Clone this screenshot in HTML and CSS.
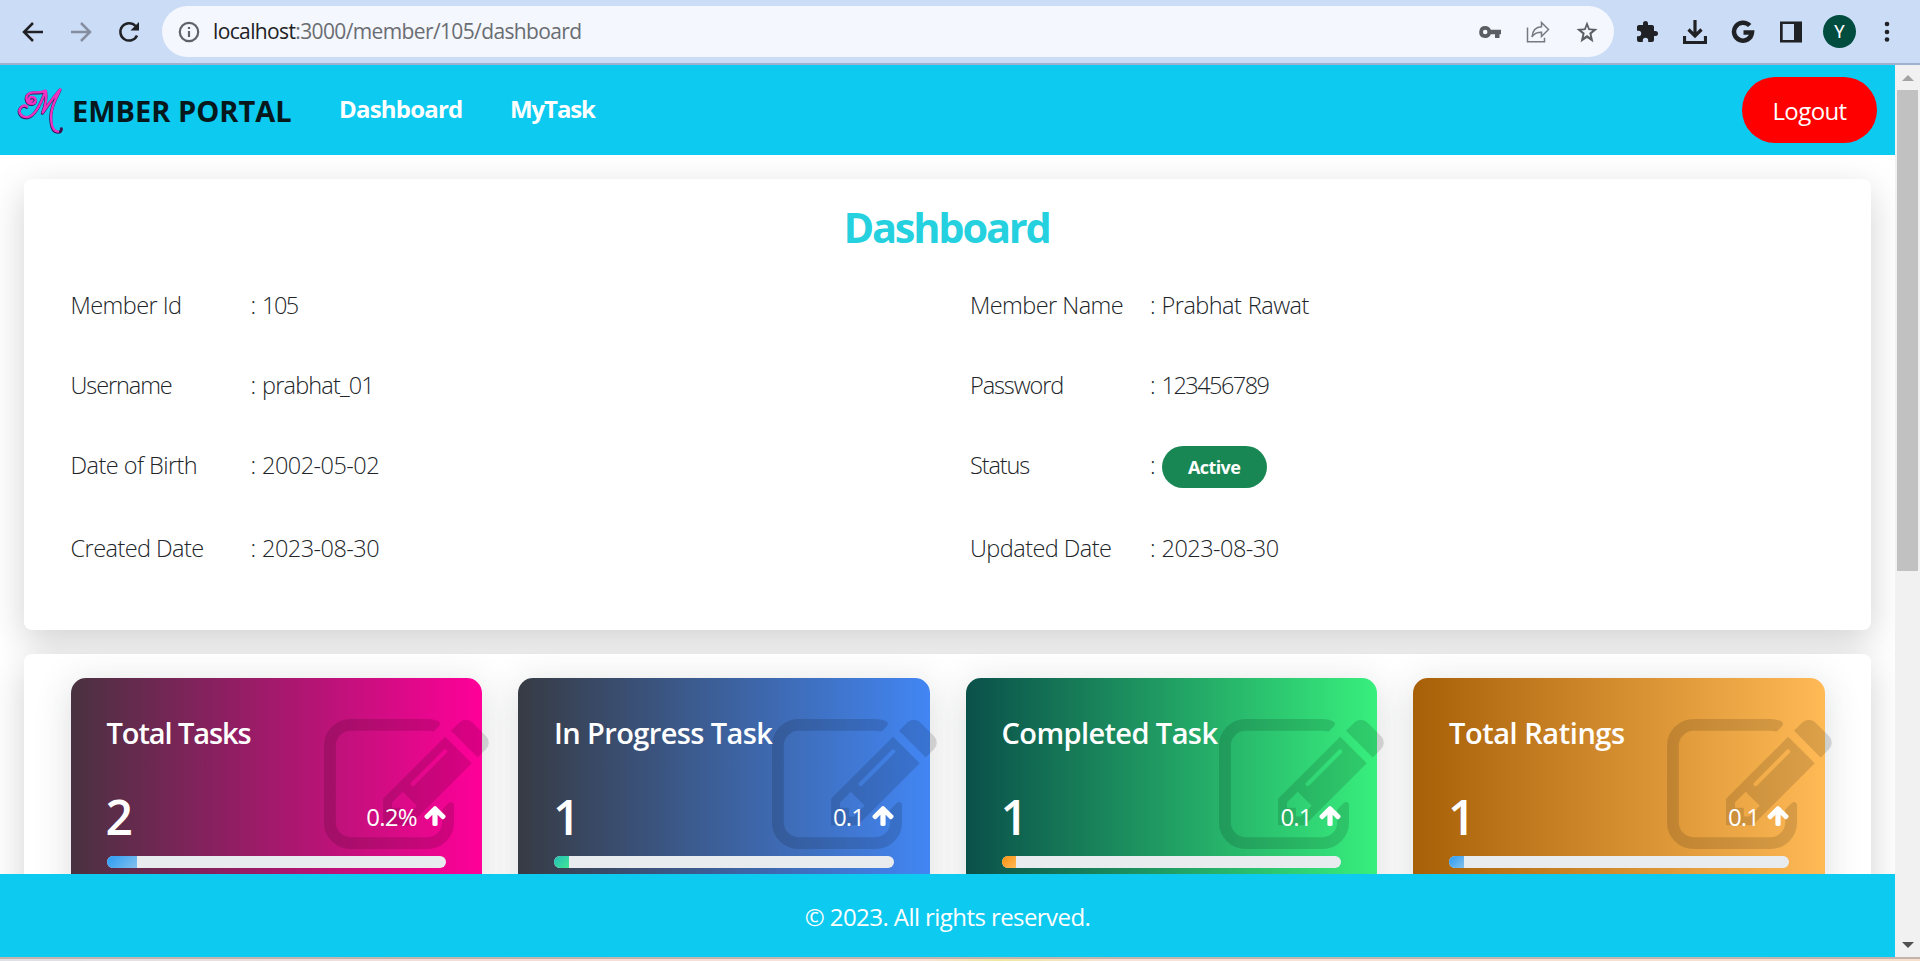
FILE: index.html
```html
<!DOCTYPE html>
<html lang="en">
<head>
<meta charset="utf-8">
<title>Member Portal</title>
<link rel="stylesheet" href="styles.css">
</head>
<body>
<svg class="defs" aria-hidden="true">
  <symbol id="edit" viewBox="0 128 1792 1408"><path d="M888 1184l116-116-152-152-116 116v56h96v96h56zM1328 464q-16-16-33 1l-350 350q-17 17-1 33t33-1l350-350q17-17 1-33zM1408 1058v190q0 119-84.500 203.500t-203.500 84.500h-832q-119 0-203.500-84.500t-84.500-203.500v-832q0-119 84.500-203.500t203.500-84.500h832q63 0 117 25 15 7 18 23 3 17-9 29l-49 49q-14 14-32 8-23-6-45-6h-832q-66 0-113 47t-47 113v832q0 66 47 113t113 47h832q66 0 113-47t47-113v-126q0-13 9-22l64-64q15-15 35-7t20 29zM1312 320l288 288-672 672h-288v-288zM1756 452l-92 92-288-288 92-92q28-28 68-28t68 28l152 152q28 28 28 68t-28 68z"/></symbol>
  <symbol id="up" viewBox="117 192 1558 1472"><path d="M1675 971q0 51-37 90l-75 75q-38 38-91 38-54 0-90-38l-294-293v704q0 52-37.500 84.500t-90.500 32.500h-128q-53 0-90.500-32.500t-37.500-84.500v-704l-294 293q-36 38-90 38t-90-38l-75-75q-38-38-38-90 0-53 38-91l651-651q35-37 90-37 54 0 91 37l651 651q37 39 37 91z"/></symbol>
</svg>
<div class="window">
  <div class="toolbar">
    <div class="nav-buttons">
      <svg width="24" height="24" viewBox="0 0 24 24" class="line"><path d="M22 12H3M12 3 3 12l9 9"/></svg>
      <svg width="24" height="24" viewBox="0 0 24 24" class="line faded"><path d="M2 12h19M12 3l9 9-9 9"/></svg>
      <svg width="24" height="24" viewBox="0 0 24 24" class="line"><path d="M20 15.500A8.700 8.700 0 1 1 18.500 6"/><path class="solid" d="M22 2v8.500h-8.500z"/></svg>
    </div>
    <div class="omnibox">
      <svg width="22" height="22" viewBox="0 0 22 22" class="info"><circle cx="11" cy="11" r="9.200"/><path d="M11 10v6M11 6v2"/></svg>
      <span class="url"><b>localhost</b>:3000/member/105/dashboard</span>
      <div class="box-icons">
        <svg width="22" height="14" viewBox="0 0 22 14"><path fill="#5b5e63" fill-rule="evenodd" d="M6.200 1a6 6 0 0 1 5.600 3.700H22v4.600h-1.500V13H16V9.300h-4.200A6 6 0 1 1 6.200 1zm0 3.700a2.300 2.300 0 1 0 0 4.600 2.300 2.300 0 0 0 0-4.600z"/></svg>
        <svg width="24" height="24" viewBox="0 0 24 24" class="share"><path d="M1.500 7.500v14.200h17v-4"/><path d="M6 17c.6-7 4-10 9.500-10.200V2.500l7 7-7 7v-4.200C11 12.300 8 13.500 6 17z"/></svg>
        <svg width="24" height="24" viewBox="0 0 24 24"><path fill="#5b5e63" fill-rule="evenodd" d="M12 1.500l2.700 6.900 7.800.6-6 5 1.900 8.200-6.400-4.200-6.400 4.200 1.900-8.200-6-5 7.800-.6zM12 6.300l-1.400 3.800-4.100.3 3.200 2.600-1 4.200 3.300-2.200 3.300 2.200-1-4.200 3.200-2.600-4.100-.3z"/></svg>
      </div>
    </div>
    <div class="actions">
      <svg width="24" height="24" viewBox="0 0 24 24"><path fill="#202124" d="M20.500 11H19V7c0-1.100-.9-2-2-2h-4V3.500a2.500 2.500 0 0 0-5 0V5H4c-1.100 0-2 .9-2 2v3.800h1.500a2.700 2.700 0 0 1 0 5.400H2V20c0 1.100.9 2 2 2h3.800v-1.500a2.700 2.700 0 0 1 5.400 0V22H17c1.100 0 2-.9 2-2v-4h1.500a2.500 2.500 0 0 0 0-5z"/></svg>
      <svg width="24" height="24" viewBox="0 0 24 24" class="download"><path d="M12 0v16M5.500 9.500 12 16l6.500-6.500M1.500 16v6.500h21V16"/></svg>
      <svg width="24" height="24" viewBox="0 0 24 24" class="google"><path d="M18.700 5.600A9 9 0 1 0 21 12.500H12.500"/></svg>
      <svg width="24" height="24" viewBox="0 0 24 24"><path fill="#202124" fill-rule="evenodd" d="M1 1.500h22v21H1zM3.700 4v16H15V4z"/></svg>
      <span class="avatar">Y</span>
      <svg width="6" height="22" viewBox="0 0 6 22" fill="#202124"><circle cx="3" cy="3" r="2.300"/><circle cx="3" cy="11" r="2.300"/><circle cx="3" cy="18.500" r="2.300"/></svg>
    </div>
  </div>
  <div class="viewport">
    <div class="page">
      <header class="navbar">
        <svg class="logo" width="47" height="47" viewBox="51 51 141 141">
          <g class="shade"><path d="M97 91c-3 7-13 3-10-5 4-9 21-5 20 6-1 13-24 13-27-3-3-14 7-22 21-22 15 1 26 0 36-5-10 28-28 75-53 79-23 3-32-18-20-30 5-5 12-5 17-1"/><path d="M138 64c3 23-2 44-10 64 18-26 34-49 53-70-15 31-32 61-27 97 2 20 8 29 20 30 8 0 13-5 11-11"/></g>
          <g class="ink"><path d="M97 91c-3 7-13 3-10-5 4-9 21-5 20 6-1 13-24 13-27-3-3-14 7-22 21-22 15 1 26 0 36-5-10 28-28 75-53 79-23 3-32-18-20-30 5-5 12-5 17-1"/><path d="M138 64c3 23-2 44-10 64 18-26 34-49 53-70-15 31-32 61-27 97 2 20 8 29 20 30"/></g>
        </svg>
        <span class="brand">EMBER PORTAL</span>
        <a class="link dash">Dashboard</a>
        <a class="link task">MyTask</a>
        <a class="logout">Logout</a>
      </header>
      <main class="content">
        <section class="panel profile">
          <h1>Dashboard</h1>
          <dl class="fields">
            <div><dt>Member Id</dt><dd>: <span class="digits">105</span></dd></div>
            <div><dt>Member Name</dt><dd>: Prabhat Rawat</dd></div>
            <div><dt class="tight">Username</dt><dd>: <span class="user">prabhat_01</span></dd></div>
            <div><dt class="tight">Password</dt><dd>: <span class="digits">123456789</span></dd></div>
            <div><dt>Date of Birth</dt><dd>: 2002-05-02</dd></div>
            <div><dt class="tight">Status</dt><dd>: <span class="badge">Active</span></dd></div>
            <div><dt>Created Date</dt><dd>: 2023-08-30</dd></div>
            <div><dt>Updated Date</dt><dd>: 2023-08-30</dd></div>
          </dl>
        </section>
        <section class="panel stats">
          <article class="card pink"><svg class="mark"><use href="#edit"/></svg><h2 class="tight">Total Tasks</h2><div class="row"><strong>2</strong><span class="rate">0.2% <svg><use href="#up"/></svg></span></div><div class="track"><i class="blue" style="width:8.900%"></i></div></article>
          <article class="card navy"><svg class="mark"><use href="#edit"/></svg><h2>In Progress Task</h2><div class="row"><strong>1</strong><span class="rate short">0.1 <svg><use href="#up"/></svg></span></div><div class="track"><i class="green" style="width:4.400%"></i></div></article>
          <article class="card leaf"><svg class="mark"><use href="#edit"/></svg><h2>Completed Task</h2><div class="row"><strong>1</strong><span class="rate short">0.1 <svg><use href="#up"/></svg></span></div><div class="track"><i class="orange" style="width:4.400%"></i></div></article>
          <article class="card amber"><svg class="mark"><use href="#edit"/></svg><h2 class="loose">Total Ratings</h2><div class="row"><strong>1</strong><span class="rate short">0.1 <svg><use href="#up"/></svg></span></div><div class="track"><i class="blue" style="width:4.400%"></i></div></article>
        </section>
      </main>
      <footer class="footer"><span>© 2023. All rights reserved.</span></footer>
    </div>
    <div class="scrollbar"><i class="arrow-up"></i><i class="thumb"></i><i class="arrow-down"></i></div>
  </div>
  <div class="edge"></div>
</div>
</body>
</html>
```
FILE: styles.css
```css
* { box-sizing: border-box; }
body { margin: 0; font-family: "Open Sans", "Noto Sans", sans-serif; font-size: 24px; color: #212529; background: #fff; overflow: hidden; }
h1, h2, dl, dd { margin: 0; }
svg { display: block; flex: none; }
.defs { display: none; }
.window { display: flex; flex-direction: column; height: 961px; }

.toolbar { display: flex; align-items: center; height: 65px; flex: none; background: #cbdcf7; border-bottom: 2px solid #a0b0d0; }
.nav-buttons { display: flex; gap: 24px; width: 162px; padding-left: 21px; }
.line { fill: none; stroke: #202124; stroke-width: 2.500; }
.line .solid { fill: #202124; stroke: none; }
.faded { stroke: #858d9f; }
.omnibox { display: flex; align-items: center; width: 1452px; height: 51px; padding: 0 15px 0 16px; border-radius: 26px; background: #f4f7fd; }
.info { fill: none; stroke: #5f6368; stroke-width: 2.200; }
.url { margin-left: 13px; font-size: 21px; letter-spacing: -.63px; line-height: 30px; padding-bottom: 1px; color: #6a6d72; white-space: nowrap; }
.url b { font-weight: 400; color: #202124; }
.box-icons { display: flex; align-items: center; gap: 25px; margin-left: auto; }
.share { fill: none; stroke: #777a7f; stroke-width: 1.500; }
.actions { display: flex; align-items: center; margin-left: 21px; gap: 24px; }
.download { fill: none; stroke: #202124; stroke-width: 3.200; }
.google { fill: none; stroke: #202124; stroke-width: 4.500; }
.avatar { width: 33px; height: 33px; margin-left: -4px; margin-right: 4px; border-radius: 50%; background: #004d40; color: #fff; font: 18px/33px Roboto, sans-serif; text-align: center; }

.viewport { display: flex; flex: none; height: 892px; }
.page { display: flex; flex-direction: column; width: 1895px; }
.navbar { display: flex; align-items: center; height: 90px; flex: none; padding: 0 18px 0 17px; background: #0dcaf0; position: relative; z-index: 1; }
.logo { fill: none; stroke-linecap: round; stroke-linejoin: round; }
.shade { stroke: #3a1450; stroke-width: 9; transform: translate(-1px, 2px); }
.ink { stroke: #f032c2; stroke-width: 7; }
.brand { width: 267px; margin-left: 8px; font-size: 29px; font-weight: 700; color: #06181c; white-space: nowrap; }
.link { font-weight: 700; font-size: 24px; letter-spacing: -.8px; color: #fff; padding-bottom: 4px; }
.dash { width: 171px; }
.task { letter-spacing: -1.100px; }
.logout { margin-left: auto; width: 135px; height: 66px; border-radius: 33px; background: #f00; color: #fff; line-height: 68px; letter-spacing: -.6px; text-align: center; }

.content { flex: none; height: 719px; padding: 24px; overflow: hidden; display: flex; flex-direction: column; gap: 24px; }
.panel { flex: none; border-radius: 8px; background: #fff; box-shadow: 0 12px 36px rgba(0, 0, 0, .18); }
.profile { height: 451px; padding: 16px 46.500px; }
h1 { font-size: 41.500px; line-height: 62px; letter-spacing: -2.200px; margin-left: -2px; padding-top: 1px; text-align: center; font-weight: 700; color: #25d1df; }
.fields { display: grid; grid-template-columns: 1fr 1fr; grid-template-rows: 80px 80px 83px 83px; padding-top: 8px; margin-right: -45px; font-size: 23.500px; letter-spacing: -.55px; font-weight: 300; }
.fields div { display: flex; line-height: 78px; white-space: nowrap; }
.fields dt { width: 180px; }
.fields dd { word-spacing: 1px; }
.fields .tight { letter-spacing: -1.100px; }
.fields .user { letter-spacing: -.85px; }
.fields .digits { letter-spacing: -1.550px; }
.badge { display: inline-block; width: 105px; height: 42px; margin-top: -2px; border-radius: 21px; background: #198754; color: #fff; font-size: 18px; font-weight: 700; letter-spacing: -.6px; line-height: 42px; text-align: center; vertical-align: middle; }
.stats { display: grid; grid-template-columns: repeat(4, 411.500px); gap: 36px; height: 330px; padding: 24px 46.500px; }
.card { position: relative; border-radius: 15px; padding: 36px; color: #fff; box-shadow: 0 6px 36px rgba(58, 59, 69, .18); }
.pink { background: linear-gradient(to right, #493240, #f09); }
.navy { background: linear-gradient(to right, #373b44, #4286f4); }
.leaf { background: linear-gradient(to right, #0a504a, #38ef7d); }
.amber { background: linear-gradient(to right, #a86008, #ffba56); }
.mark { position: absolute; left: 253.500px; top: 41px; width: 165.500px; height: 130px; fill: #000; opacity: .13; }
h2 { position: relative; font-size: 29px; line-height: 38px; font-weight: 600; letter-spacing: -.6px; white-space: nowrap; }
h2.tight { letter-spacing: -1.100px; }
h2.loose { letter-spacing: -.45px; }
.row { position: relative; display: flex; justify-content: space-between; height: 68px; margin-top: 32px; }
.row strong { font-size: 48px; font-weight: 600; line-height: 66px; margin-left: -1px; }
.rate { display: flex; align-items: center; gap: 7px; height: 64px; letter-spacing: -.7px; }
.rate.short { gap: 7.500px; letter-spacing: -.9px; }
.rate svg { width: 22px; height: 20px; fill: #fff; }
.track { position: relative; height: 12px; margin-top: 4px; border-radius: 6px; overflow: hidden; background: #e9ecef; }
.track i { display: block; height: 100%; }
.blue { background: linear-gradient(135deg, #289cf5, #84c0ec); }
.green { background: linear-gradient(135deg, #23bdb8, #43e794); }
.orange { background: linear-gradient(135deg, #f9900e, #ffba56); }
.footer { height: 83px; flex: none; background: #0dcaf0; color: #fff; line-height: 86px; letter-spacing: -.57px; text-align: center; position: relative; z-index: 1; }
.scrollbar { display: flex; flex-direction: column; align-items: center; width: 25px; padding: 10px 0 9px; background: #f1f1f1; }
.arrow-up { border: 6px solid transparent; border-top: 0; border-bottom: 6px solid #a3a3a3; }
.thumb { width: 21px; height: 481px; margin-top: 9px; background: #c1c1c1; }
.arrow-down { margin-top: auto; border: 6px solid transparent; border-bottom: 0; border-top: 6px solid #505050; }
.edge { height: 4px; border-top: 2px solid #c5b3ae; background: linear-gradient(to right, #dfe0e6, #f5ddd6 25%, #f8e2d8 48%, #efe8a0 52%, #f8e2d8 58%, #f6dfcb); }
```
